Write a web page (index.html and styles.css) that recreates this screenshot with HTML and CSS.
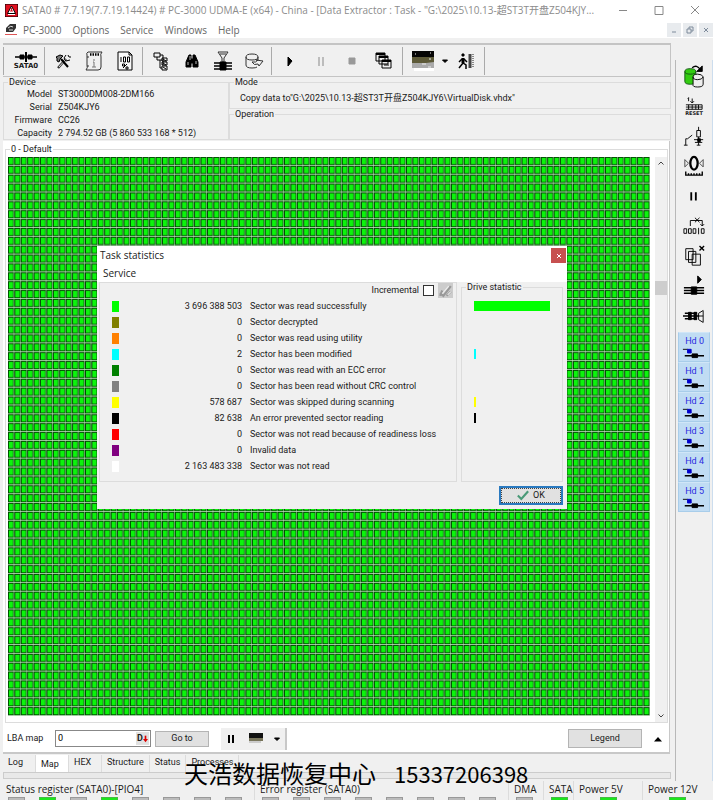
FILE: index.html
```
<!DOCTYPE html>
<html lang="en">
<head>
  <meta charset="UTF-8">
  <meta name="viewport" content="width=device-width, initial-scale=1.0">
  <title>PC-3000 Data Extractor</title>
  <link rel="stylesheet" href="styles.css">
</head>
<body>
  <div class="window">
    <header class="titlebar">
      <svg class="logo" viewBox="0 0 13 13"><rect width="13" height="13" fill="#e01020"/><path d="M6.500 2L10.500 9.500H2.500Z" fill="#fff"/><path d="M5 7h3M4 10.500h5M6.500 4v3" stroke="#e01020"/><path d="M3 10.500h7" stroke="#fff"/></svg>
      <h1>SATA0 # 7.7.19(7.7.19.14424) # PC-3000 UDMA-E (x64) - China - [Data Extractor : Task - "G:\2025\10.13-超ST3T开盘Z504KJY...</h1>
      <div class="win-buttons">
        <button aria-label="Minimize"><svg viewBox="0 0 10 10"><path d="M1 5.500h8"/></svg></button>
        <button aria-label="Maximize"><svg viewBox="0 0 10 10"><path d="M1 1.500h8v8H1z"/></svg></button>
        <button aria-label="Close"><svg viewBox="0 0 10 10"><path d="M1 1l8 8M9 1l-8 8"/></svg></button>
      </div>
    </header>

    <nav class="menubar">
      <svg class="menu-logo" viewBox="0 0 12 12"><path d="M1 4L5 0h6v4L8 8H1z" fill="#333"/><path d="M3 4q3-3 5-1M4 6h4" stroke="#ddd" fill="none"/><path d="M0 10.500h12" stroke="#d55"/></svg>
      <a href="#">PC-3000</a>
      <a href="#">Options</a>
      <a href="#">Service</a>
      <a href="#">Windows</a>
      <a href="#">Help</a>
      <div class="child-buttons">
        <button aria-label="Minimize child"><svg viewBox="0 0 8 8"><path d="M2 6h4"/></svg></button>
        <button aria-label="Restore child"><svg viewBox="0 0 8 8"><path d="M3 3V1h4v4H5M1 3h4v4H1z"/></svg></button>
        <button aria-label="Close child"><svg viewBox="0 0 8 8"><path d="M2 2l4 4M6 2l-4 4"/></svg></button>
      </div>
    </nav>

    <div class="workspace">
      <main class="main">
        <div class="toolbar">
          <div class="group port">
            <button class="sata"><svg viewBox="0 0 24 10"><path d="M1 5h22" stroke-width="1.500"/><path d="M6 3h4v4H6zM14 3h4v4h-4z" fill="#000"/><path d="M12 0v10" stroke-width="2"/></svg><span>SATA0</span></button>
          </div>
          <div class="group">
            <button aria-label="Tools"><svg viewBox="0 0 20 20"><path d="M5 17l8-9" stroke-width="2.500" stroke="#333"/><path d="M6 16l7-8" stroke="#ddd"/><path d="M13 4l-2 3 2 3 4-1M15 4l1 2 2 0"/><path d="M3 6l4-2 3 1-3 3-1 3-2-1 0-3z" fill="#777"/><path d="M8 8l7 8" stroke-width="2"/></svg></button>
            <button aria-label="Info"><svg viewBox="0 0 20 20"><path d="M4 1h14q-2 2-1 5v10q0 3-3 3H2q2-2 1-5V4q-1-2 1-3zM3 6h2M3 15h2" stroke="#333"/><path d="M6 3.500h9" stroke-width="2.500" stroke-dasharray="1.500 1"/><path d="M10 8v2M9 11h1v5M8 16h4" stroke="#777"/></svg></button>
            <button aria-label="Log"><svg viewBox="0 0 20 20"><path d="M3 1h11l3 3v15H3zM14 1v3h3" fill="#f8f8f8"/><path d="M6 6v5M8.500 6h2v5h-2zM12.500 6h2v5h-2z"/><path d="M8 17l4-4M7.500 13h2v2h-2zM11 16h2v2h-2z"/></svg></button>
          </div>
          <div class="group">
            <button aria-label="Structure"><svg viewBox="0 0 20 20"><path d="M3 2h6v4H3zM6 6v3h5M9 4h3v10M11 7h5v3h-5zM11 11h5v3h-5zM11 15h5v4h-5zM9 9v8h2"/><path d="M12 8l3 2M12 12l3 2M12 16l3 2"/></svg></button>
            <button aria-label="Search"><svg viewBox="0 0 20 20"><path d="M7 4h2v4h2V4h2l3 7v5h-5v-4H9v4H4v-5z" fill="#000"/><path d="M6 11v3M14 10v3M8 5v4" stroke="#bbb"/></svg></button>
            <button aria-label="Filter"><svg viewBox="0 0 20 20"><path d="M5 1h10l-4 6v4H9V7zM7 3h6" stroke="#333"/><path d="M1 12h18M1 15h18M1 18h18" stroke-width="1.600"/><path d="M7 11h6v8H7z" fill="#000"/></svg></button>
            <button aria-label="Disk"><svg viewBox="0 0 20 20"><path d="M2 6q0-3 6-3t6 3-6 3-6-3v8q0 3 6 3 4 0 5-1M14 6v3M8 11q4 1 6-2h-2l7 1-4 5-1-2q-4 2-6-2" stroke="#333"/></svg></button>
          </div>
          <div class="group run">
            <button aria-label="Start"><svg viewBox="0 0 20 20"><path d="M8 6l4 4-4 5z" fill="#000"/></svg></button>
            <button aria-label="Pause"><svg viewBox="0 0 20 20"><path d="M8 6v9M12 6v9" stroke="#aaa" stroke-width="1.500"/></svg></button>
            <button aria-label="Stop"><svg viewBox="0 0 20 20"><path d="M7 7h6v6H7z" fill="#999" stroke="#999"/></svg></button>
            <button aria-label="Windows list"><svg viewBox="0 0 20 20"><path d="M3 2h9v8H3zM6 5h9v8H6zM9 9h9v8H9z" fill="#eee"/><path d="M3 3h9M6 6h9M9 10h9" stroke-width="2"/><path d="M11 14h5"/></svg></button>
          </div>
          <div class="group view">
            <button class="picture" aria-label="Map picture"><svg viewBox="0 0 22 20"><path d="M0 0h22v6H0z" fill="#050505" stroke="none"/><path d="M0 6h22v6H0z" fill="#5d5a38" stroke="none"/><path d="M0 12h14l8-1v6H0z" fill="#aaa" stroke="none"/><path d="M2 17h20v3H2z" fill="#fff" stroke="none"/><path d="M3 3h1M17 8h2M10 13h4M16 16h3M18 2h1" stroke="#eee"/></svg></button>
            <button class="drop" aria-label="Picture options"><svg viewBox="0 0 8 8"><path d="M1.500 3h5L4 5.500z" fill="#000"/></svg></button>
            <button aria-label="Exit"><svg viewBox="0 0 20 20"><path d="M6 3h2v2H6z" fill="#000"/><path d="M7 7v5" stroke-width="3"/><path d="M6 8l-3 3M8 8l3 3M7 12l-4 5M7 12l3 2v4" stroke-width="1.500"/><path d="M14 3v14" stroke-width="3" stroke="#444"/><path d="M17 3v14" stroke="#888" stroke-width="2" stroke-dasharray="1 1"/></svg></button>
          </div>
        </div>

        <div class="info">
          <fieldset class="device">
            <legend>Device</legend>
            <dl>
              <dt>Model</dt><dd>ST3000DM008-2DM166</dd>
              <dt>Serial</dt><dd>Z504KJY6</dd>
              <dt>Firmware</dt><dd>CC26</dd>
              <dt>Capacity</dt><dd>2 794.52 GB (5 860 533 168 * 512)</dd>
            </dl>
          </fieldset>
          <div class="task">
            <fieldset class="mode">
              <legend>Mode</legend>
              <p>Copy data to"G:\2025\10.13-超ST3T开盘Z504KJY6\VirtualDisk.vhdx"</p>
            </fieldset>
            <fieldset class="operation">
              <legend>Operation</legend>
            </fieldset>
          </div>
        </div>

        <section class="map-panel">
          <fieldset class="map-box">
            <legend>0 - Default</legend>
            <div class="map-area">
              <!-- 100 x 63 sectors -->
              <svg class="map" viewBox="0 0 6400 5607" preserveAspectRatio="none">
                <defs>
                  <pattern id="sector" width="64" height="89" patternUnits="userSpaceOnUse">
                    <rect width="64" height="89" fill="#c8e6c8"/>
                    <rect width="59" height="81" fill="#004800"/>
                    <rect x="9" y="9" width="42" height="63" fill="#0cf40c"/>
                  </pattern>
                </defs>
                <rect width="6400" height="5607" fill="url(#sector)"/>
              </svg>
              <div class="scrollbar">
                <svg viewBox="0 0 8 8"><path d="M1.500 5.500L4 3l2.500 2.500"/></svg>
                <div class="thumb"></div>
                <svg viewBox="0 0 8 8"><path d="M1.500 2.500L4 5l2.500-2.500"/></svg>
              </div>
            </div>
          </fieldset>
          <div class="map-controls">
            <label for="lba">LBA map</label>
            <div class="lba-field">
              <input type="text" id="lba" value="0">
              <button aria-label="Decimal"><b>D</b><svg viewBox="0 0 6 8"><path d="M3 0v5" stroke="#d00" stroke-width="2"/><path d="M0 4h6L3 8z" fill="#d00" stroke="none"/></svg></button>
            </div>
            <button class="push goto">Go to</button>
            <div class="mini-bar">
              <button aria-label="Pause map"><svg viewBox="0 0 12 12"><path d="M4 2v8M8 2v8" stroke-width="2"/></svg></button>
              <button class="mini-view" aria-label="Map view"><svg viewBox="0 0 14 12"><path d="M0 0h14v5H0z" fill="#111" stroke="none"/><path d="M0 5h14v3H0z" fill="#77745a" stroke="none"/><path d="M0 8h12v2H0z" fill="#ccc" stroke="none"/></svg></button>
              <button class="mini-drop" aria-label="Map view options"><svg viewBox="0 0 12 12"><path d="M3.500 5h5L6 7.500z" fill="#000"/></svg></button>
            </div>
            <button class="push legend-btn">Legend</button>
            <button class="fold" aria-label="Collapse"><svg viewBox="0 0 10 10"><path d="M1 7.500h8L5 3z" fill="#000" stroke="none"/></svg></button>
          </div>
        </section>

        <div class="tabs">
          <a href="#">Log</a>
          <a href="#" class="active">Map</a>
          <a href="#">HEX</a>
          <a href="#">Structure</a>
          <a href="#">Status</a>
          <a href="#">Processes</a>
        </div>
        <div class="progress"></div>
      </main>

      <aside class="sidebar">
        <button aria-label="Disks"><svg viewBox="0 0 24 26"><path d="M2 8q0-3 6-3t6 3v11q0 3-6 3t-6-3z" fill="#3c1" stroke="#151"/><path d="M2 8q0 3 6 3t6-3" stroke="#151"/><path d="M11 14q0-3 5-3t6 3v8q0 3-6 3t-5-3z" fill="#eee"/><path d="M11 14q0 3 5 3t6-3"/><path d="M10 4q5-4 9 2" stroke-width="1.500"/><path d="M21 2v6h-6z" fill="#000"/></svg></button>
        <button class="reset" aria-label="Reset"><svg viewBox="0 0 20 14"><path d="M4 1v4M3 2l1-1M8 2v5M6 5l2 2 2-2"/><path d="M1 9h18v5H1M4 9v5M8 9v5M12 9v5M15 9v5M1 11.500h18"/></svg><span>RESET</span></button>
        <button aria-label="Power switch"><svg viewBox="0 0 24 24"><path d="M1 22h4M3 22v-7h2l5-4M17 2v4M15 6h4v7h-4zM17 13v9M12 16h10M13 19h8M15 22h4"/><path d="M16 15h3v3h-3z" fill="#000"/></svg></button>
        <button aria-label="Zero"><svg viewBox="0 0 24 24"><ellipse cx="12" cy="9" rx="4" ry="7" stroke-width="2.500"/><path d="M2 5l4 4-4 4zM22 5l-4 4 4 4z" stroke="#444"/><path d="M3 18v4h18v-4M6 20v2M9 20v2M12 20v2M15 20v2M18 20v2" stroke-width="1.500"/></svg></button>
        <button aria-label="Pause"><svg viewBox="0 0 24 24"><path d="M9 8v9M14 8v9" stroke-width="2"/></svg></button>
        <button aria-label="Sectors"><svg viewBox="0 0 24 24"><path d="M1 15h3v5H1zM6 15h3v5H6zM11 15h3v5h-3zM17 14v7M20 15h3v5h-3zM8 12V6h13v6M19 10l2 2 2-2M13 3l5 5M18 3l-5 5"/></svg></button>
        <button aria-label="Remove copies"><svg viewBox="0 0 24 24"><path d="M3 4h8v12H3zM6 7h8v12H6zM10 10h9v12h-9z" fill="#eee"/><path d="M18 1l5 5M23 1l-5 5" stroke-width="1.500"/></svg></button>
        <button aria-label="Run head"><svg viewBox="0 0 24 24"><path d="M16 1l4 4-4 4z" fill="#000"/><path d="M1 14h22M1 17h22M1 20h22" stroke-width="1.700"/><path d="M9 13h6v8H9z" fill="#000"/></svg></button>
        <button aria-label="Connector"><svg viewBox="0 0 24 24"><path d="M2 9h13M0 12h18M2 15h13" stroke-width="1.700"/><path d="M6 8h3v8H6zM12 8h3v8h-3z" fill="#000"/><path d="M17 9l5-3v13l-5-3zM18 12h4"/></svg></button>
        <div class="heads">
          <button><span>Hd 0</span><svg viewBox="0 0 24 12"><path d="M1 2h5l4 3"/><path d="M6 2h4v4H6z" fill="#00c" stroke="#00c"/><path d="M3 9h21" stroke-width="1.700"/><path d="M11 7h6v4h-6z" fill="#000"/></svg></button>
          <button><span>Hd 1</span><svg viewBox="0 0 24 12"><path d="M1 2h5l4 3"/><path d="M6 2h4v4H6z" fill="#00c" stroke="#00c"/><path d="M3 9h21" stroke-width="1.700"/><path d="M11 7h6v4h-6z" fill="#000"/></svg></button>
          <button><span>Hd 2</span><svg viewBox="0 0 24 12"><path d="M1 2h5l4 3"/><path d="M6 2h4v4H6z" fill="#00c" stroke="#00c"/><path d="M3 9h21" stroke-width="1.700"/><path d="M11 7h6v4h-6z" fill="#000"/></svg></button>
          <button><span>Hd 3</span><svg viewBox="0 0 24 12"><path d="M1 2h5l4 3"/><path d="M6 2h4v4H6z" fill="#00c" stroke="#00c"/><path d="M3 9h21" stroke-width="1.700"/><path d="M11 7h6v4h-6z" fill="#000"/></svg></button>
          <button><span>Hd 4</span><svg viewBox="0 0 24 12"><path d="M1 2h5l4 3"/><path d="M6 2h4v4H6z" fill="#00c" stroke="#00c"/><path d="M3 9h21" stroke-width="1.700"/><path d="M11 7h6v4h-6z" fill="#000"/></svg></button>
          <button><span>Hd 5</span><svg viewBox="0 0 24 12"><path d="M1 2h5l4 3"/><path d="M6 2h4v4H6z" fill="#00c" stroke="#00c"/><path d="M3 9h21" stroke-width="1.700"/><path d="M11 7h6v4h-6z" fill="#000"/></svg></button>
        </div>
      </aside>
    </div>

    <footer class="statusbar">
      <div class="status-group status-reg"><span>Status register (SATA0)-[PIO4]</span><div class="leds"><i></i><i class="on"></i><i></i><i class="on"></i><i></i><i></i><i></i><i></i></div></div>
      <div class="status-group error-reg"><span>Error register (SATA0)</span><div class="leds"><i></i><i></i><i></i><i></i><i></i><i></i><i></i><i></i></div></div>
      <div class="status-group dma"><span>DMA</span><div class="leds"><i></i></div></div>
      <div class="status-group sata-led"><span>SATA</span><div class="leds"><i class="on"></i></div></div>
      <div class="status-group p5"><span>Power 5V</span><div class="leds"><i class="on"></i></div></div>
      <div class="status-group p12"><span>Power 12V</span><div class="leds"><i class="on"></i></div></div>
    </footer>

    <div class="dialog" role="dialog" aria-label="Task statistics">
      <div class="dialog-title">
        <h2>Task statistics</h2>
        <button aria-label="Close dialog"><svg viewBox="0 0 8 8"><path d="M2 2l4 4M6 2l-4 4"/></svg></button>
      </div>
      <div class="dialog-menu"><a href="#">Service</a></div>
      <div class="dialog-body">
        <div class="stats">
          <div class="incremental">
            <label for="inc">Incremental</label>
            <input type="checkbox" id="inc">
            <button aria-label="Clear" disabled><svg viewBox="0 0 14 14"><path d="M2 9l3 3 7-9M2 12l2-5M8 12l4-4" stroke="#999" stroke-width="2"/><path d="M4 10l6-7M9 11l3-3" stroke="#eee"/></svg></button>
          </div>
          <table>
            <tr><td><i class="c-read"></i></td><td>3 696 388 503</td><td>Sector was read successfully</td></tr>
            <tr><td><i class="c-decrypted"></i></td><td>0</td><td>Sector decrypted</td></tr>
            <tr><td><i class="c-utility"></i></td><td>0</td><td>Sector was read using utility</td></tr>
            <tr><td><i class="c-modified"></i></td><td>2</td><td>Sector has been modified</td></tr>
            <tr><td><i class="c-ecc"></i></td><td>0</td><td>Sector was read with an ECC error</td></tr>
            <tr><td><i class="c-crc"></i></td><td>0</td><td>Sector has been read without CRC control</td></tr>
            <tr><td><i class="c-skipped"></i></td><td>578 687</td><td>Sector was skipped during scanning</td></tr>
            <tr><td><i class="c-error"></i></td><td>82 638</td><td>An error prevented sector reading</td></tr>
            <tr><td><i class="c-readiness"></i></td><td>0</td><td>Sector was not read because of readiness loss</td></tr>
            <tr><td><i class="c-invalid"></i></td><td>0</td><td>Invalid data</td></tr>
            <tr><td><i class="c-unread"></i></td><td>2 163 483 338</td><td>Sector was not read</td></tr>
          </table>
        </div>
        <fieldset class="drive">
          <legend>Drive statistic</legend>
          <ul>
            <li><i class="c-read" style="width: 100%"></i></li>
            <li></li>
            <li></li>
            <li><i class="c-modified" style="width: 2%"></i></li>
            <li></li>
            <li></li>
            <li><i class="c-skipped" style="width: 2%"></i></li>
            <li><i class="c-error" style="width: 2%"></i></li>
            <li></li>
            <li></li>
            <li></li>
          </ul>
        </fieldset>
      </div>
      <div class="dialog-foot">
        <button class="ok"><svg viewBox="0 0 14 12"><path d="M1 6l4 4 8-9" stroke="#4a9a78" stroke-width="2.500"/></svg>OK</button>
      </div>
    </div>

    <div class="caption"><span class="caption-name">天浩数据恢复中心</span><span class="caption-phone">15337206398</span></div>
  </div>
</body>
</html>
```
FILE: styles.css
```
* {
  box-sizing: border-box;
}

body {
  margin: 0;
  background: #f0f0f0;
  color: #1a1a1a;
  font-family: Roboto, "Liberation Sans", "Noto Sans CJK SC", sans-serif;
  font-size: 9px;
  line-height: 13px;
}

button {
  padding: 0;
  border: none;
  background: none;
  color: inherit;
  font: inherit;
}

a {
  color: inherit;
  text-decoration: none;
}

svg {
  display: block;
  fill: none;
  stroke: #000;
}

i {
  display: block;
}

fieldset {
  margin: 0;
  padding: 0;
  border: 1px solid #dcdcdc;
  min-width: 0;
}

legend {
  margin-left: 4px;
  padding: 0 1px;
  line-height: 11px;
}

.window {
  position: relative;
  display: flex;
  flex-direction: column;
  height: 100vh;
  overflow: hidden;
}

/* title and menu */
.titlebar {
  display: flex;
  align-items: center;
  height: 20px;
  padding-left: 5px;
  background: #fff;
  color: #8c8c8c;
  font-family: "Open Sans", "Noto Sans CJK SC", sans-serif;
}

.logo {
  width: 13px;
  height: 13px;
  stroke-width: 1;
}

.titlebar h1 {
  flex: 1;
  min-width: 0;
  margin: 0 0 0 4px;
  font-size: 10px;
  font-weight: normal;
  white-space: nowrap;
}

.win-buttons {
  display: flex;
}

.win-buttons button {
  width: 36px;
  height: 20px;
}

.win-buttons svg {
  width: 10px;
  height: 10px;
  margin: auto;
  stroke: #888;
}

.menubar {
  display: flex;
  align-items: center;
  gap: 11px;
  height: 18px;
  padding: 2px 0 0 5px;
  background: #fff;
  color: #666;
  font-family: "Open Sans", sans-serif;
  font-size: 10px;
}

.menu-logo {
  width: 12px;
  height: 12px;
  margin-right: -5px;
  stroke: none;
}

.child-buttons {
  display: flex;
  gap: 2px;
  margin-left: auto;
}

.child-buttons button {
  width: 14px;
  height: 14px;
  background: #e8ebee;
}

.child-buttons svg {
  width: 8px;
  height: 8px;
  margin: auto;
  stroke: #7d8a9a;
}

/* layout */
.workspace {
  display: flex;
  flex: 1;
  min-height: 0;
}

.main {
  display: flex;
  flex-direction: column;
  flex: 1;
  min-width: 0;
  padding: 5px 4px 0 3px;
}

.toolbar {
  display: flex;
  align-items: center;
  height: 34px;
  border: 1px solid #c4c4c4;
  border-width: 2px 1px 1px 0;
}

.group {
  display: flex;
  align-items: center;
  height: 28px;
  padding: 0 2px;
  border-right: 1px solid #aaa;
}

.group button {
  width: 31px;
  height: 26px;
}

.group svg {
  width: 20px;
  height: 20px;
  margin: auto;
}

.group .sata {
  width: 38px;
  padding-left: 4px;
  font-family: "DejaVu Sans", sans-serif;
  font-size: 7px;
  font-weight: bold;
  line-height: 8px;
}

.group .sata svg {
  width: 24px;
  height: 10px;
}

.port {
  padding: 0 1px;
  border-left: 1px solid #aaa;
}

.run {
  padding-right: 4px;
}

.group .drop {
  width: 10px;
}

.group .drop svg {
  width: 8px;
  height: 8px;
}

.view {
  padding-right: 3px;
}

.group .picture {
  width: 35px;
}

.group .picture svg {
  width: 22px;
}

/* device info */
.info {
  display: flex;
  height: 63px;
  margin-bottom: 1px;
}

.device {
  width: 226px;
  flex: none;
}

.device dl {
  display: grid;
  grid-template-columns: 48px 1fr;
  column-gap: 6px;
  margin: 0;
}

.device dt {
  text-align: right;
}

.device dd {
  margin: 0;
}

.task {
  display: flex;
  flex-direction: column;
  flex: 1;
  min-width: 0;
}

.mode {
  height: 32px;
}

.mode p {
  margin: 4px 0 0 10px;
  white-space: nowrap;
}

.operation {
  flex: 1;
}

/* sector map */
.map-panel {
  display: flex;
  flex-direction: column;
  flex: 1;
  min-height: 0;
  margin-right: 1px;
  padding: 3px 1px 0 2px;
  border-right: 1px solid #c8c8c8;
  border-bottom: 2px solid #c8c8c8;
  background: #fff;
}

.map-box {
  flex: 1;
  min-height: 0;
}

.map-area {
  display: flex;
  gap: 5px;
  height: 100%;
  padding: 2px 0 0 2px;
}

.map {
  flex: 1;
  width: 100%;
  min-width: 0;
  height: calc(100% - 6px);
  stroke: none;
}

.scrollbar {
  display: flex;
  flex-direction: column;
  align-items: center;
  justify-content: space-between;
  width: 12px;
  background: #f0f0f0;
}

.scrollbar svg {
  width: 8px;
  height: 12px;
  stroke: #444;
}

.thumb {
  width: 12px;
  height: 14px;
  margin-bottom: 304px;
  background: #cdcdcd;
}

.map-controls {
  display: flex;
  align-items: center;
  height: 29px;
  padding: 2px 5px 0 2px;
}

.map-controls label {
  width: 48px;
}

.lba-field {
  display: flex;
  align-items: center;
  width: 96px;
  height: 17px;
  border: 1px solid #888;
}

.lba-field input {
  flex: 1;
  min-width: 0;
  padding: 0 2px;
  border: none;
  background: none;
  font: inherit;
}

.lba-field button {
  display: flex;
  align-items: center;
  width: 13px;
  height: 13px;
  margin-right: 1px;
  padding-left: 1px;
  background: #e1e1e1;
}

.lba-field svg {
  width: 5px;
  height: 8px;
}

.push {
  border: 1px solid #b4b4b4;
  background: #e1e1e1;
}

.goto {
  width: 54px;
  height: 16px;
  margin: 0 12px 0 4px;
}

.mini-bar {
  display: flex;
  align-items: center;
  height: 22px;
  border-right: 2px solid #c8c8c8;
  background: #f0f0f0;
}

.mini-bar button {
  width: 20px;
}

.mini-bar svg {
  width: 12px;
  height: 12px;
  margin: auto;
}

.mini-bar .mini-view {
  width: 30px;
}

.mini-view svg {
  width: 14px;
}

.mini-bar .mini-drop {
  width: 12px;
  margin-right: 2px;
}

.legend-btn {
  width: 74px;
  height: 19px;
  margin-left: auto;
}

.fold {
  margin-left: 11px;
}

.fold svg {
  width: 10px;
  height: 10px;
}

.tabs {
  display: flex;
  height: 17px;
  margin-top: 1px;
}

.tabs a {
  min-width: 33px;
  padding: 1px 5px 0;
  border-right: 1px solid #dcdcdc;
}

.tabs .active {
  padding-top: 3px;
  background: #fff;
}

.progress {
  height: 7px;
  margin-bottom: 2px;
  border: 1px solid #ccc;
  background: #e9e9e9;
}

/* right tool column */
.sidebar {
  width: 38px;
  margin-top: 22px;
  padding: 1px 2px 0;
  border-left: 1px solid #b8b8b8;
  border-right: 1px solid #cde;
}

.sidebar button {
  display: block;
  width: 100%;
  height: 30px;
}

.sidebar svg {
  width: 22px;
  height: 24px;
  margin: auto;
}

.sidebar .reset {
  font-family: "DejaVu Sans", sans-serif;
  font-size: 5px;
  font-weight: bold;
  line-height: 6px;
}

.sidebar .reset svg {
  width: 18px;
  height: 14px;
}

.heads {
  margin-top: 1px;
}

.heads button {
  height: 30px;
  padding-right: 5px;
  border: 1px solid #a8cdea;
  border-top-color: #d0e6f7;
  background: #c0dcf3;
  color: #2a2ae0;
  line-height: 12px;
  text-align: right;
}

.heads svg {
  height: 12px;
  margin: 0 0 0 3px;
}

/* bottom status */
.statusbar {
  display: flex;
  height: 19px;
  padding-left: 1px;
  font-family: "Open Sans", sans-serif;
  font-size: 10px;
  line-height: 16px;
}

.status-group {
  overflow: hidden;
  padding-left: 5px;
  border-right: 1px solid #dcdcdc;
  white-space: nowrap;
}

.status-group span {
  display: block;
  height: 16px;
}

.leds {
  display: flex;
  gap: 14px;
  padding-left: 2px;
}

.leds i {
  width: 17px;
  height: 3px;
  border: 1px solid #999;
  border-bottom: none;
  background: #bbb;
}

.leds .on {
  border-color: #4b4;
  background: #1de61d;
}

.status-reg,
.error-reg {
  width: 254px;
}

.dma {
  width: 35px;
}

.sata-led {
  width: 30px;
}

.p5 {
  width: 69px;
}

.p5 .leds,
.p12 .leds {
  padding-left: 21px;
}

.p12 {
  flex: 1;
  border: none;
}

/* statistics dialog */
.dialog {
  position: absolute;
  top: 246px;
  left: 97px;
  width: 470px;
  background: #f0f0f0;
}

.dialog-title,
.dialog-menu {
  display: flex;
  justify-content: space-between;
  height: 18px;
  padding-left: 3px;
  background: #fff;
  font-family: "Open Sans", sans-serif;
  font-size: 10px;
  line-height: 19px;
}

.dialog-title h2 {
  margin: 0;
  font-size: 10px;
  font-weight: normal;
}

.dialog-title button {
  width: 15px;
  height: 15px;
  margin: 2px 1px 0 0;
  background: #c75050;
}

.dialog-title svg {
  width: 8px;
  height: 8px;
  margin: auto;
  stroke: #fff;
}

.dialog-menu {
  padding-left: 6px;
}

.dialog-body {
  display: flex;
  gap: 4px;
  height: 200px;
  padding: 0 4px 0 2px;
}

.stats {
  flex: 1;
  border: 1px solid #dcdcdc;
}

.incremental {
  display: flex;
  align-items: center;
  justify-content: flex-end;
  gap: 4px;
  height: 15px;
  margin-right: 3px;
}

.incremental input {
  appearance: none;
  width: 11px;
  height: 11px;
  margin: 0;
  border: 1px solid #333;
  background: #fff;
}

.incremental button {
  width: 15px;
  height: 15px;
  background: #ccc;
}

table {
  width: 100%;
  border-collapse: collapse;
}

td {
  height: 16px;
  padding: 0;
  white-space: nowrap;
}

td:first-child {
  width: 27px;
  padding-left: 12px;
}

td:nth-child(2) {
  width: 115px;
  text-align: right;
}

td:nth-child(3) {
  padding-left: 8px;
}

td i {
  width: 7px;
  height: 11px;
}

.drive {
  width: 102px;
}

.drive ul {
  margin: 0;
  padding: 5px 12px 0;
  list-style: none;
}

.drive li {
  height: 16px;
  padding: 3px 0;
}

.drive i {
  height: 10px;
}

.c-read { background: #00ff00; }
.c-decrypted { background: #808000; }
.c-utility { background: #ff8000; }
.c-modified { background: #00ffff; }
.c-ecc { background: #008000; }
.c-crc { background: #808080; }
.c-skipped { background: #ffff00; }
.c-error { background: #000; }
.c-readiness { background: #ff0000; }
.c-invalid { background: #800080; }
.c-unread { background: #fff; }

.dialog-foot {
  display: flex;
  justify-content: flex-end;
  padding: 4px;
}

.ok {
  display: flex;
  align-items: center;
  justify-content: center;
  gap: 4px;
  width: 64px;
  height: 19px;
  border: 2px solid #2a7ac0;
  outline: 1px dotted #444;
  outline-offset: -3px;
  background: #e1e1e1;
}

.ok svg {
  width: 12px;
  height: 11px;
}

/* contact caption over the window */
.caption {
  position: absolute;
  bottom: 13px;
  left: 184px;
  display: flex;
  align-items: center;
  gap: 18px;
  color: #000;
  font-family: "Noto Sans CJK SC", sans-serif;
  line-height: 28px;
  white-space: nowrap;
}

.caption-name {
  font-size: 24px;
}

.caption-phone {
  font-size: 22px;
}
```
